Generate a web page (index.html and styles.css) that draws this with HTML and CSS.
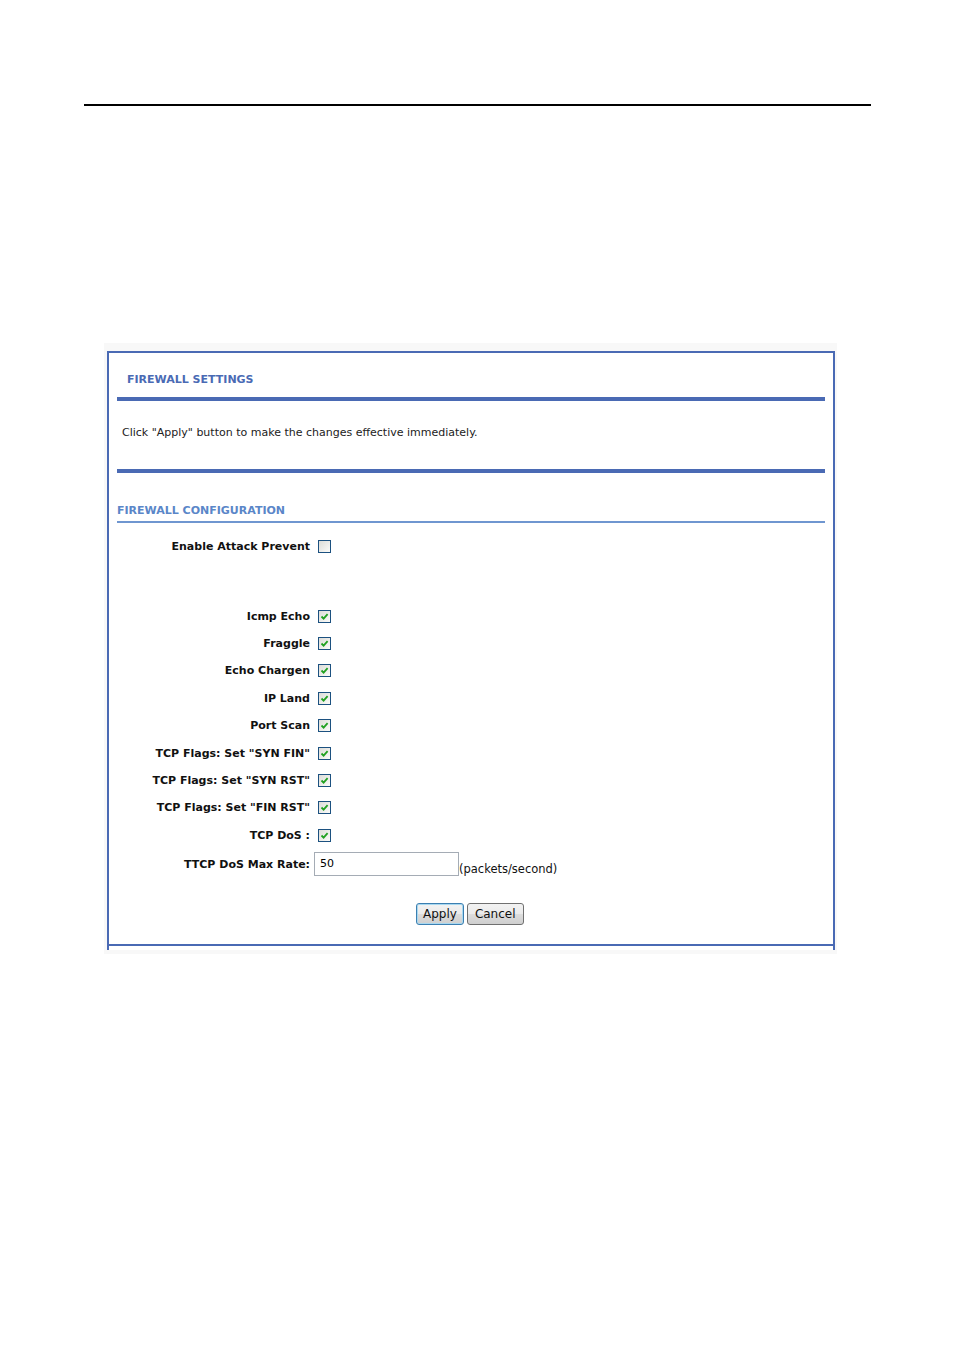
FILE: index.html
```html
<!DOCTYPE html>
<html>
<head>
<meta charset="utf-8">
<link rel="stylesheet" href="styles.css">
</head>
<body>
<div class="topline"></div>
<div class="frame">
  <div class="box">
    <div class="title">FIREWALL SETTINGS</div>
    <div class="thick"></div>
    <div class="note">Click "Apply" button to make the changes effective immediately.</div>
    <div class="thick"></div>
    <div class="subtitle">FIREWALL CONFIGURATION</div>
    <div class="thin"></div>
    <div class="rows">
      <div class="row"><span class="lbl">Enable Attack Prevent</span><span class="cb"></span></div>
      <div class="spacer"></div>
      <div class="row"><span class="lbl">Icmp Echo</span><span class="cb on"><svg viewBox="0 0 9 9"><path d="M1.5 4.5 L3.6 6.6 L7.6 2.2" /></svg></span></div>
      <div class="row"><span class="lbl">Fraggle</span><span class="cb on"><svg viewBox="0 0 9 9"><path d="M1.5 4.5 L3.6 6.6 L7.6 2.2" /></svg></span></div>
      <div class="row"><span class="lbl">Echo Chargen</span><span class="cb on"><svg viewBox="0 0 9 9"><path d="M1.5 4.5 L3.6 6.6 L7.6 2.2" /></svg></span></div>
      <div class="row"><span class="lbl">IP Land</span><span class="cb on"><svg viewBox="0 0 9 9"><path d="M1.5 4.5 L3.6 6.6 L7.6 2.2" /></svg></span></div>
      <div class="row"><span class="lbl">Port Scan</span><span class="cb on"><svg viewBox="0 0 9 9"><path d="M1.5 4.5 L3.6 6.6 L7.6 2.2" /></svg></span></div>
      <div class="row"><span class="lbl">TCP Flags: Set "SYN FIN"</span><span class="cb on"><svg viewBox="0 0 9 9"><path d="M1.5 4.5 L3.6 6.6 L7.6 2.2" /></svg></span></div>
      <div class="row"><span class="lbl">TCP Flags: Set "SYN RST"</span><span class="cb on"><svg viewBox="0 0 9 9"><path d="M1.5 4.5 L3.6 6.6 L7.6 2.2" /></svg></span></div>
      <div class="row"><span class="lbl">TCP Flags: Set "FIN RST"</span><span class="cb on"><svg viewBox="0 0 9 9"><path d="M1.5 4.5 L3.6 6.6 L7.6 2.2" /></svg></span></div>
      <div class="row"><span class="lbl">TCP DoS :</span><span class="cb on"><svg viewBox="0 0 9 9"><path d="M1.5 4.5 L3.6 6.6 L7.6 2.2" /></svg></span></div>
      <div class="row rate"><span class="lbl">TTCP DoS Max Rate:</span><span class="inp">50</span><span class="unit">(packets/second)</span></div>
    </div>
    <div class="buttons"><span class="btn apply">Apply</span><span class="btn">Cancel</span></div>
    <div class="bottomline"></div>
  </div>
</div>
</body>
</html>
```
FILE: styles.css
```css
html, body { margin: 0; padding: 0; background: #fff; }
body { font-family: "DejaVu Sans", Verdana, sans-serif; color: #000; width: 954px; height: 1351px; }

.topline { margin: 104px 0 0 84px; width: 787px; height: 2px; background: #000; }

.frame {
  margin: 237px 0 0 104px;
  width: 733px;
  background: #f8f8f8;
  padding: 8px 0 4px 3px;
  box-sizing: border-box;
}
.box {
  width: 728px;
  box-sizing: border-box;
  border: 2px solid #4a6ab4;
  border-bottom: none;
  background: #fff;
  padding: 0 0 4px 0;
}
.title {
  margin: 20px 0 0 18px;
  height: 14px;
  line-height: 14px;
  font-size: 11px;
  font-weight: bold;
  color: #4a6ab4;
}
.thick { margin: 10px 8px 0 8px; height: 4px; background: #4a6ab4; }
.note {
  margin: 25px 0 0 13px;
  height: 14px;
  line-height: 14px;
  font-size: 11px;
  color: #222;
}
.note + .thick { margin-top: 29px; }
.subtitle {
  margin: 31px 0 0 8px;
  height: 14px;
  line-height: 14px;
  font-size: 11px;
  font-weight: bold;
  color: #5a86c8;
}
.thin { margin: 3px 8px 0 8px; height: 2px; background: #6f96d0; }

.rows { margin: 10px 0 0 8px; }
.row { display: flex; align-items: center; height: 27.4px; }
.spacer { height: 42px; }
.lbl {
  width: 193px;
  text-align: right;
  font-size: 11px;
  font-weight: bold;
  color: #111;
  margin-right: 8px;
  white-space: nowrap;
}
.cb {
  width: 13px; height: 13px;
  box-sizing: border-box;
  border: 1px solid #1c5180;
  background: linear-gradient(135deg, #dcdcd7, #fbfbf9);
  display: flex; align-items: center; justify-content: center;
}
.cb svg { width: 9px; height: 9px; display: block; }
.cb svg path { fill: none; stroke: #21a121; stroke-width: 1.8; }

.rate { height: 29px; margin-top: 1px; }
.rate .lbl { margin-right: 4px; }
.inp {
  width: 145px; height: 24px;
  box-sizing: border-box;
  border: 1px solid #a5acb5;
  background: #fff;
  font-size: 11px;
  line-height: 22px;
  padding-left: 5px;
}
.unit { font-size: 11.5px; color: #111; margin-top: 9px; margin-left: 0px; }

.buttons { display: flex; justify-content: flex-start; gap: 3px; margin: 24px 0 0 307px; height: 22px; }
.btn {
  height: 22px; box-sizing: border-box;
  border: 1px solid #707070;
  border-radius: 3px;
  background: linear-gradient(#f2f2f2, #ebebeb 50%, #dddddd 51%, #cfcfcf);
  font-family: "DejaVu Sans", sans-serif;
  font-size: 12px;
  line-height: 20px;
  padding: 0 7px;
  color: #111;
}
.btn.apply { border-color: #3c7fb1; box-shadow: inset 0 0 0 1px #a8d8f0; padding: 0 6px; }
.bottomline { margin: 19px 0 0 0; height: 2px; background: #4a6ab4; }
```
